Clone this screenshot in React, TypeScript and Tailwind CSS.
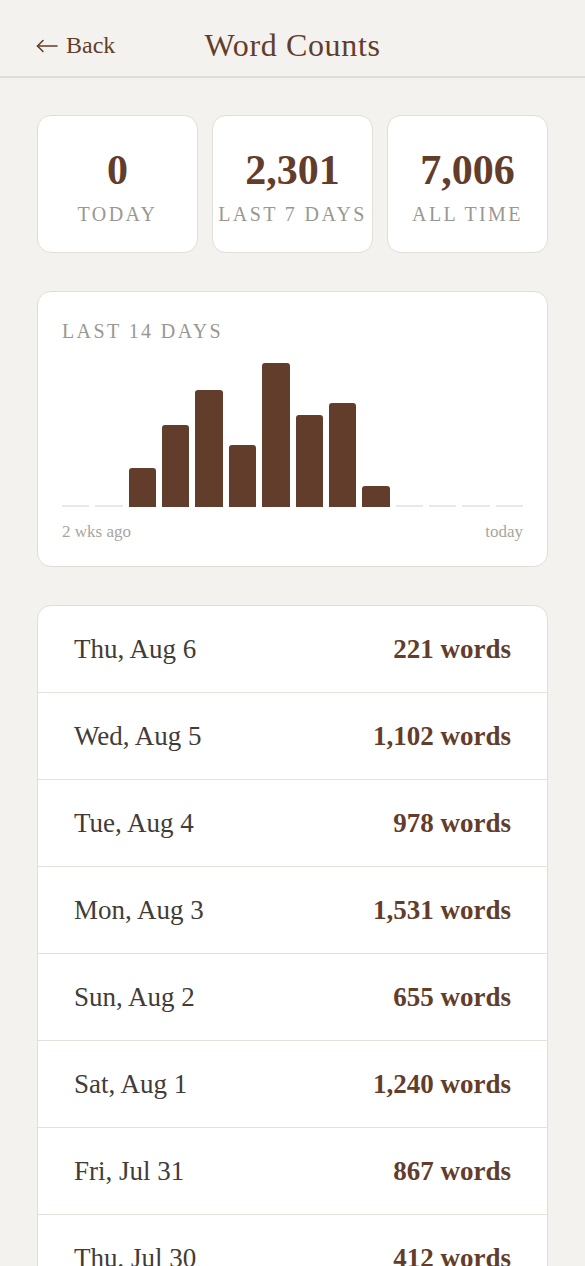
import React from "react";

const bars = [0, 0, 412, 867, 1240, 655, 1531, 978, 1102, 221, 0, 0, 0, 0];
const maxV = 1531;

const rows = [
  ["Thu, Aug 6", "221 words"],
  ["Wed, Aug 5", "1,102 words"],
  ["Tue, Aug 4", "978 words"],
  ["Mon, Aug 3", "1,531 words"],
  ["Sun, Aug 2", "655 words"],
  ["Sat, Aug 1", "1,240 words"],
  ["Fri, Jul 31", "867 words"],
  ["Thu, Jul 30", "412 words"],
];

function Stat({ value, label }: { value: string; label: string }) {
  return (
    <div className="flex-1 h-[138px] rounded-[14px] border border-[#e2ded7] bg-white flex flex-col items-center justify-center">
      <div className="text-[42px] leading-[48px] font-bold text-[#633d2b] mt-[4px]">{value}</div>
      <div className="text-[20px] leading-[26px] tracking-[0.12em] text-[#9a9792] mt-[7px] whitespace-nowrap">{label}</div>
    </div>
  );
}

export default function App() {
  return (
    <div className="min-h-screen bg-[#f4f2ee] font-['Liberation_Serif',serif]">
      <header className="relative h-[78px] pt-[14px] border-b-2 border-[#e0ddd7] flex items-center justify-center">
        <div className="absolute left-[36px] top-[14px] bottom-0 flex items-center text-[24px] text-[#633d2b]">
          <svg width="22" height="14" viewBox="0 0 22 14" className="mr-[8px] mt-[1px]" fill="none" stroke="#633d2b" strokeWidth="1.6" strokeLinecap="round" strokeLinejoin="round">
            <path d="M21 7H1.5" />
            <path d="M7 1.5L1.5 7L7 12.5" />
          </svg>
          <span>Back</span>
        </div>
        <h1 className="text-[32px] tracking-[0.02em] text-[#633d2b]">Word Counts</h1>
      </header>
      <main className="px-[37px] pt-[37px] flex flex-col gap-[38px]">
        <div className="flex gap-[14px]">
          <Stat value="0" label="TODAY" />
          <Stat value="2,301" label="LAST 7 DAYS" />
          <Stat value="7,006" label="ALL TIME" />
        </div>
        <div className="rounded-[14px] border border-[#e2ded7] bg-white px-[24px] pt-[25px] pb-[22px]">
          <div className="text-[20px] leading-[28px] tracking-[0.12em] text-[#9a9792]">LAST 14 DAYS</div>
          <div className="mt-[18px] h-[144px] flex items-end gap-[6px]">
            {bars.map((v, i) =>
              v === 0 ? (
                <div key={i} className="flex-1 h-[2px] bg-[#ebe8e3]" />
              ) : (
                <div
                  key={i}
                  className="flex-1 rounded-t-[3px] bg-[#633d2b]"
                  style={{ height: `${(v / maxV) * 144}px` }}
                />
              )
            )}
          </div>
          <div className="mt-[13px] flex justify-between text-[17px] leading-[24px] text-[#a8a5a0]">
            <span>2 wks ago</span>
            <span>today</span>
          </div>
        </div>
        <div className="rounded-[14px] border border-[#e2ded7] bg-white">
          {rows.map(([d, w], i) => (
            <div
              key={i}
              className={`h-[87px] px-[36px] flex items-center justify-between ${i < rows.length - 1 ? "border-b border-[#e5e1db]" : ""}`}
            >
              <span className="text-[27px] text-[#423c37]">{d}</span>
              <span className="text-[27px] font-bold text-[#633d2b]">{w}</span>
            </div>
          ))}
        </div>
      </main>
    </div>
  );
}
